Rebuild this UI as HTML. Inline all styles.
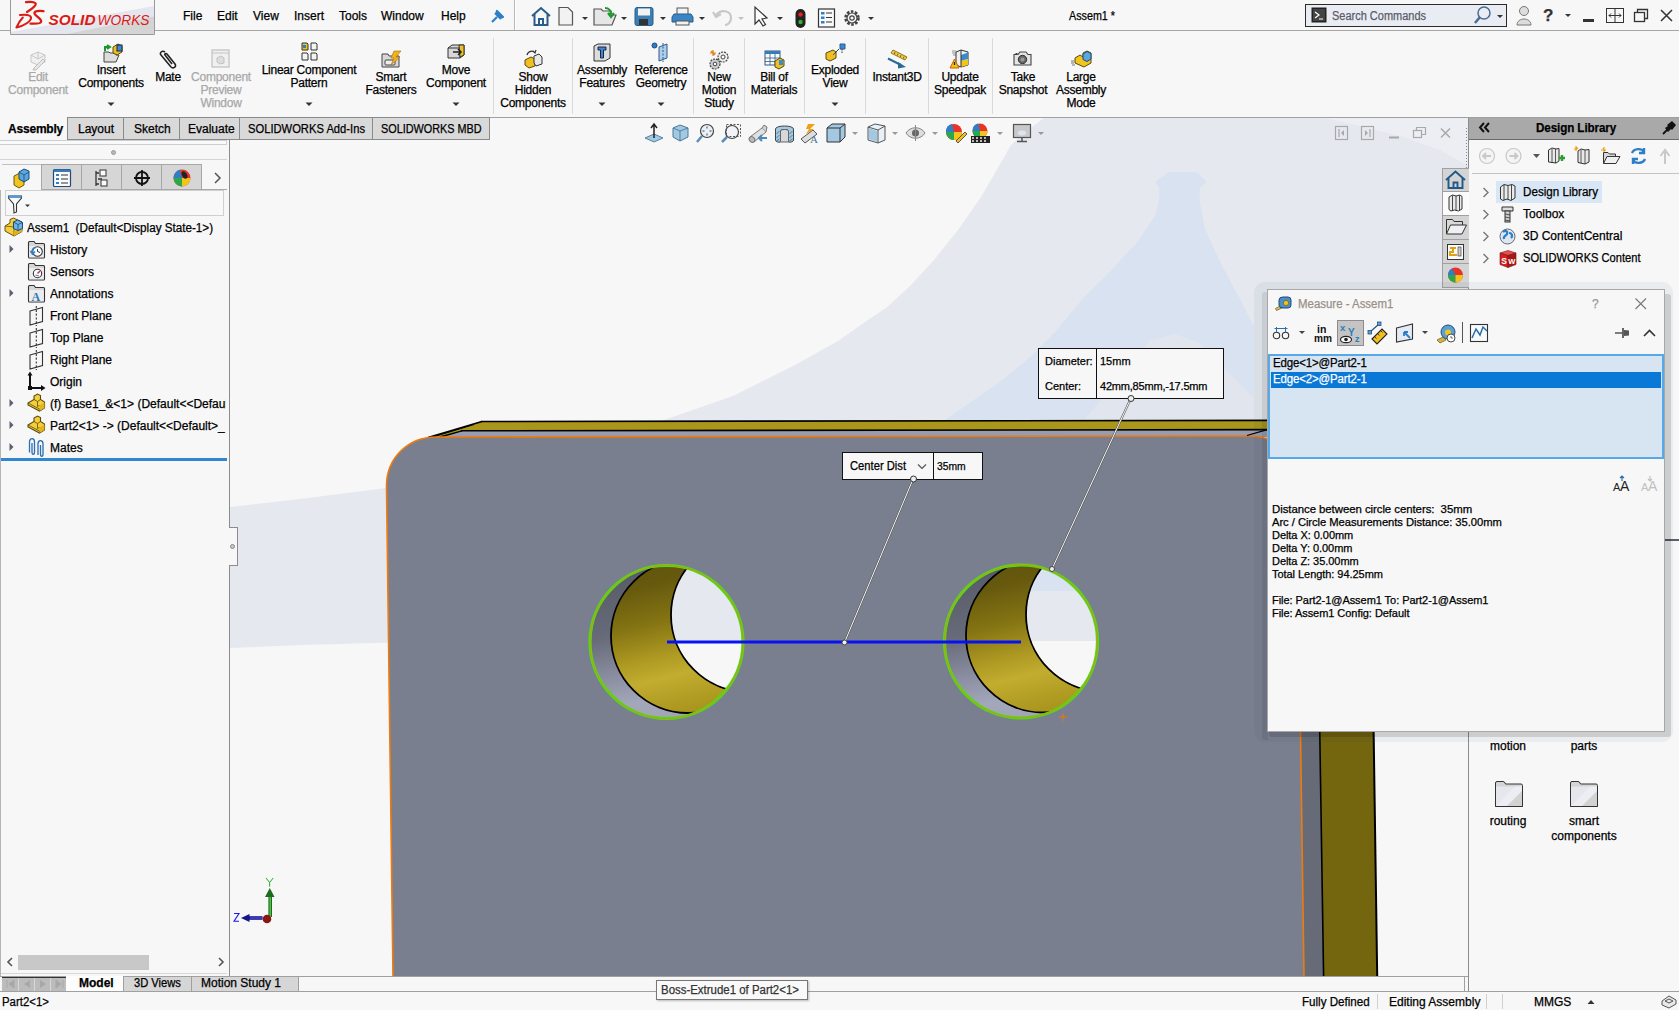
<!DOCTYPE html>
<html><head><meta charset="utf-8">
<style>
*{margin:0;padding:0;box-sizing:border-box}
html,body{width:1679px;height:1010px;overflow:hidden;background:#f7f7f7;font-family:"Liberation Sans",sans-serif;font-size:12px;color:#000}
.a{position:absolute}
.t{position:absolute;white-space:nowrap;line-height:13px;-webkit-text-stroke:0.25px currentColor}
.c{text-align:center}
.dis{color:#a8a8a8}
svg{position:absolute;overflow:visible}
</style></head><body>


<!-- ===== TOP BAR ===== -->
<div id="top" class="a" style="left:0;top:0;width:1679px;height:31px;background:#f7f7f7;border-bottom:1px solid #a6a6a6">
<!-- logo -->
<svg width="146" height="36" style="left:10px;top:0;z-index:6">
<rect x="0" y="0" width="145" height="35" fill="#f7f7f7"/>
<path d="M0.5 32 L144 6 L144 35 L0.5 35 Z" fill="#e3e6ee"/>
<path d="M52 35 L144 16.5 L144 35 Z" fill="#d4d4d4"/>
<path d="M0.5 0 L0.5 34.5 L144.5 34.5 L144.5 0" fill="none" stroke="#9a9a9a" stroke-width="1"/>
<path d="M16 2.2 C20 1.6 24 1.8 25.5 3.2 C26.5 4.5 24 8 17 12" fill="none" stroke="#dc1a14" stroke-width="2.2" stroke-linecap="round"/>
<path d="M10 15 C15 14.5 20.5 14.6 21 17.5 C21.5 21 14 26 6.5 27.5 C8 24 10.5 20 12.8 17.6" fill="none" stroke="#dc1a14" stroke-width="2.1" stroke-linecap="round" stroke-linejoin="round"/>
<path d="M33.5 11.2 C29 10.5 24 11 24.5 13.5 C25 16 31.5 18.5 31.2 21.5 C31 23.8 24 23.8 20.5 23.6" fill="none" stroke="#dc1a14" stroke-width="2.3" stroke-linecap="round"/>
<text x="38.5" y="25" font-family="Liberation Sans" font-weight="bold" font-style="italic" font-size="15" fill="#dc1a14" textLength="47" lengthAdjust="spacingAndGlyphs">SOLID</text>
<text x="87.5" y="25" font-family="Liberation Sans" font-style="italic" font-size="15" fill="#dc1a14" textLength="52" lengthAdjust="spacingAndGlyphs">WORKS</text>
</svg>
<div class="t" style="left:183px;top:10px">File</div>
<div class="t" style="left:217px;top:10px">Edit</div>
<div class="t" style="left:253px;top:10px">View</div>
<div class="t" style="left:294px;top:10px">Insert</div>
<div class="t" style="left:339px;top:10px">Tools</div>
<div class="t" style="left:381px;top:10px">Window</div>
<div class="t" style="left:441px;top:10px">Help</div>
<svg width="16" height="16" style="left:489px;top:8px"><path d="M3 14 L8 9 M6 5 L12 11 M8 3 L14 9 L11 10 L7 6 Z" stroke="#2e7fc8" stroke-width="2.2" fill="#2e7fc8" stroke-linejoin="round"/></svg>
<div class="a" style="left:514px;top:0;width:1px;height:30px;background:#b8b8b8"></div>
<div class="a" style="left:515px;top:0;width:1px;height:30px;background:#fff"></div>
<!-- quick access icons -->
<svg width="400" height="24" style="left:525px;top:4px">
<!-- home -->
<path d="M7 12 L16 4 L25 12 M9.5 10 L9.5 21 L22.5 21 L22.5 10 M14 21 L14 15 L18 15 L18 21" fill="none" stroke="#2a5d8a" stroke-width="2"/>
<!-- new doc -->
<path d="M34 3.5 L43 3.5 L47.5 8 L47.5 21 L34 21 Z" fill="#f2f2f2" stroke="#555" stroke-width="1.2"/>
<path d="M57 13 L63 13 L60 16 Z" fill="#333"/>
<!-- open -->
<path d="M69 5 L76 5 L78 7 L86 7 L86 11 L91 11 L87 21 L69 21 Z" fill="#e6e6e6" stroke="#555" stroke-width="1.2"/>
<path d="M80 4 C84 4 86 7 86 10 M83 9 L86 13 L89 9" fill="none" stroke="#1d9a2a" stroke-width="2.2"/>
<path d="M96 13 L102 13 L99 16 Z" fill="#333"/>
<!-- save -->
<rect x="110" y="3.5" width="18" height="18" rx="2" fill="#3b7fb6" stroke="#2a5d8a"/>
<rect x="113" y="4.5" width="12" height="7" fill="#f2f2f2"/>
<rect x="114" y="15" width="9" height="6" fill="#333"/>
<path d="M135 13 L141 13 L138 16 Z" fill="#333"/>
<!-- print -->
<rect x="152" y="4" width="11" height="7" fill="#f2f2f2" stroke="#555"/>
<path d="M149 10 L166 10 L168 13 L168 18 L147 18 L147 13 Z" fill="#3a86c5" stroke="#2a5d8a"/>
<rect x="151" y="17" width="13" height="4" fill="#f2f2f2" stroke="#555"/>
<path d="M174 13 L180 13 L177 16 Z" fill="#333"/>
<!-- undo disabled -->
<path d="M191 11 C196 5 206 6 206 14 C206 18 203 21 200 21 M188 8 L191 13 L196 10" fill="none" stroke="#c8c8c8" stroke-width="2.2"/>
<path d="M213 13 L219 13 L216 16 Z" fill="#c0c0c0"/>
<!-- select arrow -->
<path d="M230 3 L230 20 L234 16 L238 22 L240.5 20.5 L237 15 L242 14 Z" fill="#fafafa" stroke="#333" stroke-width="1.2"/>
<path d="M252 13 L258 13 L255 16 Z" fill="#333"/>
<!-- traffic light -->
<rect x="270.5" y="5" width="10" height="19" rx="5" fill="#222"/>
<circle cx="275.5" cy="10.5" r="2.2" fill="#e52222"/>
<circle cx="275.5" cy="18" r="2.2" fill="#2bb52b"/>
<!-- list -->
<rect x="293.5" y="5" width="16" height="18" fill="#fafafa" stroke="#333" stroke-width="1.2"/>
<rect x="296" y="8" width="3.5" height="2.5" fill="#2e7fc8"/><rect x="296" y="12.5" width="3.5" height="2.5" fill="#2e7fc8"/><rect x="296" y="17" width="3.5" height="2.5" fill="#2e7fc8"/>
<path d="M301 9 L307 9 M301 13.5 L307 13.5 M301 18 L307 18" stroke="#333"/>
<!-- gear -->
<circle cx="327" cy="14" r="6.5" fill="none" stroke="#444" stroke-width="2.5" stroke-dasharray="2.6 1.5"/>
<circle cx="327" cy="14" r="5" fill="none" stroke="#444" stroke-width="1.2"/>
<circle cx="327" cy="14" r="2.2" fill="none" stroke="#444" stroke-width="1.2"/>
<path d="M343 13 L349 13 L346 16 Z" fill="#333"/>
</svg>
<div class="t" style="left:1069px;top:10px;transform:scaleX(0.895);transform-origin:0 0">Assem1 *</div>
<!-- search -->
<div class="a" style="left:1305px;top:4px;width:202px;height:23px;border:1.5px solid #2b2b2b;background:#e9ecf3"></div>
<svg width="16" height="16" style="left:1311px;top:7px"><rect x="0.5" y="0.5" width="15" height="15" fill="#222"/><rect x="2" y="2" width="12" height="12" fill="#444"/><path d="M4 5 L8 8 L4 11 M8 12 L12 12" stroke="#fff" stroke-width="1.2" fill="none"/></svg>
<div class="t" style="left:1332px;top:10px;color:#5c5c6a;transform:scaleX(0.915);transform-origin:0 0">Search Commands</div>
<svg width="30" height="20" style="left:1474px;top:6px"><circle cx="10" cy="7" r="6" fill="none" stroke="#4a6d94" stroke-width="1.5"/><path d="M6 11 L1 17" stroke="#4a6d94" stroke-width="2.5"/><path d="M23 9 L29 9 L26 12 Z" fill="#333"/></svg>
<svg width="20" height="22" style="left:1515px;top:5px"><circle cx="9" cy="6" r="4.5" fill="#ddd" stroke="#777"/><path d="M2 20 C2 12 16 12 16 20 Z" fill="#ddd" stroke="#777"/></svg>
<div class="t" style="left:1543px;top:7px;font-size:17px;font-weight:bold;color:#333;line-height:17px">?</div>
<svg width="10" height="6" style="left:1564px;top:13px"><path d="M1 1 L7 1 L4 4 Z" fill="#333"/></svg>
<div class="a" style="left:1583px;top:19px;width:11px;height:3px;background:#333"></div>
<svg width="20" height="16" style="left:1606px;top:8px"><rect x="0.5" y="0.5" width="17" height="14" fill="none" stroke="#333"/><path d="M9 0.5 L9 14.5 M3 7.5 L15 7.5 M5 5.5 L3 7.5 L5 9.5 M13 5.5 L15 7.5 L13 9.5" stroke="#333" fill="none"/></svg>
<svg width="16" height="16" style="left:1634px;top:8px"><rect x="0.5" y="4.5" width="10" height="9" fill="none" stroke="#333" stroke-width="1.3"/><path d="M3.5 4.5 L3.5 1.5 L13.5 1.5 L13.5 10.5 L10.5 10.5" fill="none" stroke="#333" stroke-width="1.3"/></svg>
<svg width="14" height="14" style="left:1660px;top:9px"><path d="M1 1 L12 12 M12 1 L1 12" stroke="#333" stroke-width="1.5"/></svg>
</div>


<div id="ribbon" class="a" style="left:0;top:31px;width:1679px;height:86px;background:#f7f7f7">
</div>
<div id="ribbon-c" class="a" style="left:0;top:0;width:0;height:0">
<svg width="20" height="20" style="left:28px;top:50px"><path d="M3 5 L10 2 L17 5 L17 12 L10 15 L3 12 Z" fill="#f0f0f0" stroke="#c8c8c8"/><path d="M10 2 L10 9 M3 5 L10 9 L17 5" stroke="#c8c8c8" fill="none"/><path d="M6 18 L15 9 L17 11 L8 20 L5 20 Z" fill="#e8e8e8" stroke="#bbb"/></svg><div class="t c" style="left:-22px;width:120px;top:71px;letter-spacing:-0.25px;color:#a8a8a8">Edit</div>
<div class="t c" style="left:-22px;width:120px;top:84px;letter-spacing:-0.25px;color:#a8a8a8">Component</div>
<svg width="20" height="20" style="left:103px;top:43px"><path d="M1 9 L6 9 L7 10 L13 10 L13 12 L16 12 L13 19 L1 19 Z" fill="#ddd" stroke="#444"/><path d="M2 8 L2 4 L6 4 M4 2 L7 4 L4 6" stroke="#1a9a2a" stroke-width="2" fill="none"/><path d="M10 4 L15 1 L19 3 L19 9 L14 12 L10 10 Z" fill="#e8c020" stroke="#5a4a10"/><rect x="14" y="2" width="5" height="6" fill="#3a8ad0" stroke="#224"/></svg><div class="t c" style="left:51px;width:120px;top:64px;letter-spacing:-0.25px;color:#000">Insert</div>
<div class="t c" style="left:51px;width:120px;top:77px;letter-spacing:-0.25px;color:#000">Components</div>
<svg width="8" height="5" style="left:107px;top:102px"><path d="M0.5 0.5 L7.5 0.5 L4 4 Z" fill="#333"/></svg>
<svg width="20" height="20" style="left:159px;top:49px"><path d="M6 3 C3 1 0 4 2 6 L12 18 C14 20 18 18 16 15 L8 5 C7 4 5 5 6 6 L13 15" fill="none" stroke="#222" stroke-width="1.6"/></svg><div class="t c" style="left:108px;width:120px;top:71px;letter-spacing:-0.25px;color:#000">Mate</div>
<svg width="20" height="20" style="left:211px;top:49px"><rect x="1" y="1" width="17" height="17" fill="#f0f0f0" stroke="#c4c4c4" stroke-width="1.3"/><path d="M1 4 L18 4" stroke="#c4c4c4"/><path d="M6 9 L10 7 L13 9 L13 14 L9 15 L6 13 Z" fill="#ddd" stroke="#c0c0c0"/></svg><div class="t c" style="left:161px;width:120px;top:71px;letter-spacing:-0.25px;color:#a8a8a8">Component</div>
<div class="t c" style="left:161px;width:120px;top:84px;letter-spacing:-0.25px;color:#a8a8a8">Preview</div>
<div class="t c" style="left:161px;width:120px;top:97px;letter-spacing:-0.25px;color:#a8a8a8">Window</div>
<svg width="20" height="20" style="left:300px;top:42px"><path d="M2 1 L7 1 L8 2 L8 8 L2 8 Z" fill="#f3c21a" stroke="#333"/><path d="M11 1 L16 1 L17 2 L17 8 L11 8 Z" fill="#f4f4f4" stroke="#333"/><path d="M2 11 L7 11 L8 12 L8 18 L2 18 Z" fill="#f4f4f4" stroke="#333"/><path d="M11 11 L16 11 L17 12 L17 18 L11 18 Z" fill="#f4f4f4" stroke="#333"/><rect x="3" y="3" width="3" height="3" fill="#2a7fc8"/></svg><div class="t c" style="left:249px;width:120px;top:64px;letter-spacing:-0.25px;color:#000">Linear Component</div>
<div class="t c" style="left:249px;width:120px;top:77px;letter-spacing:-0.25px;color:#000">Pattern</div>
<svg width="8" height="5" style="left:305px;top:102px"><path d="M0.5 0.5 L7.5 0.5 L4 4 Z" fill="#333"/></svg>
<svg width="22" height="20" style="left:381px;top:50px"><path d="M1 4 L7 4 L8 6 L18 6 L18 17 L1 17 Z" fill="#d8d8d8" stroke="#444"/><rect x="4" y="10" width="10" height="5" rx="1" fill="#eee" stroke="#444"/><path d="M13 1 L20 1 L15 7 L19 7 L10 15 L13 8 L10 8 Z" fill="#f4b21a" stroke="#a86a10" stroke-width="0.6"/></svg><div class="t c" style="left:331px;width:120px;top:71px;letter-spacing:-0.25px;color:#000">Smart</div>
<div class="t c" style="left:331px;width:120px;top:84px;letter-spacing:-0.25px;color:#000">Fasteners</div>
<svg width="20" height="20" style="left:447px;top:43px"><path d="M1 5 L5 2 L17 2 L17 12 L13 15 L1 15 Z" fill="#d8d8d8" stroke="#333"/><path d="M1 5 L13 5 L13 15 M13 5 L17 2" fill="none" stroke="#333"/><path d="M12 2 L17 2 L17 12 L13 14 Z" fill="#f0c020" stroke="#333"/><path d="M6 9 L14 9 M11 6 L14 9 L11 12" stroke="#222" stroke-width="1.6" fill="none"/></svg><div class="t c" style="left:396px;width:120px;top:64px;letter-spacing:-0.25px;color:#000">Move</div>
<div class="t c" style="left:396px;width:120px;top:77px;letter-spacing:-0.25px;color:#000">Component</div>
<svg width="8" height="5" style="left:452px;top:102px"><path d="M0.5 0.5 L7.5 0.5 L4 4 Z" fill="#333"/></svg>
<svg width="22" height="20" style="left:522px;top:49px"><path d="M3 11 L9 8 L13 10 L13 17 L7 19 L3 16 Z" fill="#f0c020" stroke="#5a4a10"/><path d="M12 7 L17 5 L20 8 L20 15 L14 17 L12 14 Z" fill="#e8e8e8" stroke="#333"/><path d="M5 6 C6 2 11 1 13 4 M11 2 L13 4 L14 1" stroke="#333" fill="none" stroke-width="1.2"/></svg><div class="t c" style="left:473px;width:120px;top:71px;letter-spacing:-0.25px;color:#000">Show</div>
<div class="t c" style="left:473px;width:120px;top:84px;letter-spacing:-0.25px;color:#000">Hidden</div>
<div class="t c" style="left:473px;width:120px;top:97px;letter-spacing:-0.25px;color:#000">Components</div>
<svg width="20" height="20" style="left:592px;top:43px"><path d="M2 3 L6 1 L18 1 L18 15 L13 18 L2 18 Z" fill="#dcdcdc" stroke="#333"/><path d="M6 4 L14 4 L14 7 L11.5 7 L11.5 15 L8.5 15 L8.5 7 L6 7 Z" fill="#3a8ad0" stroke="#224"/></svg><div class="t c" style="left:542px;width:120px;top:64px;letter-spacing:-0.25px;color:#000">Assembly</div>
<div class="t c" style="left:542px;width:120px;top:77px;letter-spacing:-0.25px;color:#000">Features</div>
<svg width="8" height="5" style="left:598px;top:102px"><path d="M0.5 0.5 L7.5 0.5 L4 4 Z" fill="#333"/></svg>
<svg width="22" height="20" style="left:651px;top:42px"><circle cx="3.5" cy="3.5" r="2.5" fill="#2a7fc8" stroke="#1a4a80"/><path d="M8 5 L16 2 L16 16 L8 19 Z" fill="#b0cdea" stroke="#2a5d8a"/><path d="M12 1 L12 20" stroke="#2a5d8a" stroke-dasharray="2 1.5"/></svg><div class="t c" style="left:601px;width:120px;top:64px;letter-spacing:-0.25px;color:#000">Reference</div>
<div class="t c" style="left:601px;width:120px;top:77px;letter-spacing:-0.25px;color:#000">Geometry</div>
<svg width="8" height="5" style="left:657px;top:102px"><path d="M0.5 0.5 L7.5 0.5 L4 4 Z" fill="#333"/></svg>
<svg width="22" height="22" style="left:708px;top:49px"><circle cx="15" cy="8" r="5" fill="#eee" stroke="#444" stroke-width="1.2" stroke-dasharray="2 1"/><circle cx="15" cy="8" r="2" fill="#fff" stroke="#444"/><circle cx="7" cy="15" r="5" fill="#ccc" stroke="#444" stroke-width="1.2" stroke-dasharray="2 1"/><circle cx="7" cy="15" r="1.8" fill="#fff" stroke="#444"/><path d="M3 2 L7 6 M5 1 L5 7 M2 4 L8 4" stroke="#e08010" stroke-width="1.2"/></svg><div class="t c" style="left:659px;width:120px;top:71px;letter-spacing:-0.25px;color:#000">New</div>
<div class="t c" style="left:659px;width:120px;top:84px;letter-spacing:-0.25px;color:#000">Motion</div>
<div class="t c" style="left:659px;width:120px;top:97px;letter-spacing:-0.25px;color:#000">Study</div>
<svg width="22" height="20" style="left:764px;top:50px"><rect x="1" y="1" width="15" height="14" fill="#fafafa" stroke="#2a5d8a"/><rect x="1" y="1" width="15" height="3" fill="#3a7ab6"/><path d="M1 8 L16 8 M1 11.5 L16 11.5 M6 4 L6 15 M11 4 L11 15" stroke="#2a5d8a" stroke-width="0.8"/><path d="M11 11 L16 8 L20 10 L20 16 L15 19 L11 17 Z" fill="#f0c020" stroke="#5a4a10"/><rect x="15" y="10" width="4" height="5" fill="#3a8ad0"/></svg><div class="t c" style="left:714px;width:120px;top:71px;letter-spacing:-0.25px;color:#000">Bill of</div>
<div class="t c" style="left:714px;width:120px;top:84px;letter-spacing:-0.25px;color:#000">Materials</div>
<svg width="22" height="20" style="left:824px;top:43px"><path d="M2 10 L9 7 L12 9 L12 15 L6 18 L2 16 Z" fill="#f0c020" stroke="#5a4a10"/><path d="M9 12 L15 6 M16 1 L21 1 L21 6 L16 6 Z" stroke="#2a5d8a" fill="#3a8ad0" stroke-dasharray="0"/><path d="M11 10 L15 6" stroke="#333" stroke-dasharray="1.5 1"/><path d="M18 6 L18 10" stroke="#333" stroke-dasharray="1.5 1"/></svg><div class="t c" style="left:775px;width:120px;top:64px;letter-spacing:-0.25px;color:#000">Exploded</div>
<div class="t c" style="left:775px;width:120px;top:77px;letter-spacing:-0.25px;color:#000">View</div>
<svg width="8" height="5" style="left:831px;top:102px"><path d="M0.5 0.5 L7.5 0.5 L4 4 Z" fill="#333"/></svg>
<svg width="24" height="22" style="left:886px;top:49px"><path d="M5 4 L7 1 L21 8 L19 11 Z" fill="#f3d24a" stroke="#8a6a10" stroke-width="0.9"/><path d="M9 3 L8.5 5 M12 4.5 L11.5 6.5 M15 6 L14.5 8 M18 7.5 L17.5 9.5" stroke="#6a5010" stroke-width="0.9"/><path d="M2 9.5 L15 16" stroke="#2a6a9a" stroke-width="2"/><path d="M12 13 L20 18 L12 19.5 Z" fill="#2a6a9a"/></svg><div class="t c" style="left:837px;width:120px;top:71px;letter-spacing:-0.25px;color:#000">Instant3D</div>
<svg width="22" height="22" style="left:949px;top:49px"><path d="M7 3 L12 1 L19 3 L19 16 L12 18 L7 16 Z" fill="#f0f0f0" stroke="#333"/><path d="M12 6 L19 3.5 L19 10 L12 12 Z" fill="#3a8ad0"/><path d="M12 12 L19 10 L19 16 L12 18 Z" fill="#f2c51c"/><path d="M12 1 L12 18" stroke="#333"/><path d="M1 19 L5.5 10 L10 19 Z" fill="#f4c010" stroke="#c06010"/><path d="M5.5 13 L5.5 16" stroke="#222" stroke-width="1.3"/><path d="M3 2 L7 2 M3 4 L7 4 M4 6 L7 6" stroke="#666" stroke-width="0.7"/></svg><div class="t c" style="left:900px;width:120px;top:71px;letter-spacing:-0.25px;color:#000">Update</div>
<div class="t c" style="left:900px;width:120px;top:84px;letter-spacing:-0.25px;color:#000">Speedpak</div>
<svg width="22" height="20" style="left:1013px;top:50px"><path d="M1 4.5 L5 4.5 L7 2 L13 2 L15 4.5 L18 4.5 L18 15 L1 15 Z" fill="#e4e4e4" stroke="#444" stroke-width="1.1"/><circle cx="9.5" cy="9.5" r="4.2" fill="#666" stroke="#333"/><circle cx="9.5" cy="9.5" r="2" fill="#999"/><rect x="2.5" y="3" width="2" height="1.5" fill="#444"/></svg><div class="t c" style="left:963px;width:120px;top:71px;letter-spacing:-0.25px;color:#000">Take</div>
<div class="t c" style="left:963px;width:120px;top:84px;letter-spacing:-0.25px;color:#000">Snapshot</div>
<svg width="22" height="20" style="left:1071px;top:49px"><path d="M4 9 L9 6 L12 8 L12 4 L16 2 L20 4 L20 14 L13 18 L4 14 Z" fill="#f2c51c" stroke="#5a4a10"/><path d="M12 5 L16 2.5 L20 4.5 L20 10 L16 12.5 L12 10.5 Z" fill="#5aa7e0" stroke="#1f4a78"/><path d="M0 12 L3 12 M0 14 L3 14 M1 16 L4 16" stroke="#555" stroke-width="0.8"/></svg><div class="t c" style="left:1021px;width:120px;top:71px;letter-spacing:-0.25px;color:#000">Large</div>
<div class="t c" style="left:1021px;width:120px;top:84px;letter-spacing:-0.25px;color:#000">Assembly</div>
<div class="t c" style="left:1021px;width:120px;top:97px;letter-spacing:-0.25px;color:#000">Mode</div>
<div class="a" style="left:493px;top:38px;width:1px;height:76px;background:#dadada"></div>
<div class="a" style="left:572px;top:38px;width:1px;height:76px;background:#dadada"></div>
<div class="a" style="left:693px;top:38px;width:1px;height:76px;background:#dadada"></div>
<div class="a" style="left:744px;top:38px;width:1px;height:76px;background:#dadada"></div>
<div class="a" style="left:804px;top:38px;width:1px;height:76px;background:#dadada"></div>
<div class="a" style="left:865px;top:38px;width:1px;height:76px;background:#dadada"></div>
<div class="a" style="left:928px;top:38px;width:1px;height:76px;background:#dadada"></div>
<div class="a" style="left:992px;top:38px;width:1px;height:76px;background:#dadada"></div>
</div>
<!-- ===== VIEWPORT ===== -->
<div id="vp" class="a" style="left:230px;top:117px;width:1238px;height:859px;background:#f7f7f7;overflow:hidden">
<svg width="1238" height="859" viewBox="230 117 1238 859" style="left:0;top:0">
<defs>
<clipPath id="h1c"><circle cx="666.5" cy="642" r="76.5"/></clipPath>
<clipPath id="h2c"><circle cx="1021" cy="641.5" r="76.5"/></clipPath>
<linearGradient id="gw" x1="0" y1="0" x2="0.3" y2="1"><stop offset="0" stop-color="#4e515c"/><stop offset="0.5" stop-color="#676a78"/><stop offset="0.7" stop-color="#8a8ea0"/><stop offset="0.85" stop-color="#a3a7ba"/><stop offset="1" stop-color="#a0a4b6"/></linearGradient>
<linearGradient id="go" x1="0" y1="0" x2="0.3" y2="1"><stop offset="0" stop-color="#574a0c"/><stop offset="0.3" stop-color="#675a0e"/><stop offset="0.5" stop-color="#847413"/><stop offset="0.68" stop-color="#ad9822"/><stop offset="0.8" stop-color="#c2ad30"/><stop offset="1" stop-color="#aa951e"/></linearGradient>
</defs>
<!-- background swoosh -->
<path d="M230 507 L300 499 L386 488 L470 472 L560 448 L664 420 L733 396 L795 365 L838 341 L868 320 L886 308 L910 286 L934 260 L958 230 L981 197 L995 173 L1011 145 L1028 130 L1045 117 L1468 117 L1468 976 L230 976 Z" fill="#e5e8ef"/>
<path d="M230 648 C300 645 380 642 500 641 L1468 641 L1468 976 L230 976 Z" fill="#f7f7f7"/>
<path d="M1169 172 L1197 172 L1206.5 182 L1199.6 188 L1199.6 201.6 L1205 229.3 L1221.8 265.3 L1241.2 301.4 L1253.7 326.3 L1290 340 L1290 591 L790 591 L945 420 L1000 382 L1027.7 359.6 L1055.4 331.9 L1083 298.6 L1110.9 270.9 L1138.6 240.4 L1155 215.4 L1159.4 198.8 L1159.4 188 L1155 182 Z" fill="#d8e2f0"/>
<path d="M1083 421 L1150 340 L1175 334 L1200 343 L1254 398 L1254 421 Z" fill="#e1e5ed"/>
<path d="M1254 326 L1290 300 L1290 421 L1254 421 Z" fill="#e5e8ef"/>
<path d="M1320 117 L1360 126 L1400 136 L1440 150 L1468 166 L1468 117 Z" fill="#eceef3"/>
<path d="M1466.5 128 L1466.5 168" stroke="#888" stroke-width="1" stroke-dasharray="1 2"/>
<!-- part: right side olive & gray -->
<path d="M1296 430 L1315 430 L1323.4 976 L1303.8 976 Z" fill="#676b78"/>
<path d="M1315 430 L1369 430 L1377 976 L1323.4 976 Z" fill="#74650f"/>
<path d="M1315 430 L1323.6 976" stroke="#000" stroke-width="1.6"/>
<path d="M1369.2 430 L1377.2 976" stroke="#000" stroke-width="2"/>
<!-- top strip -->
<path d="M482 421 L1290 420 L1290 437 L429 438 Z" fill="#a9961b"/>
<path d="M462 431 L1290 429.8 L1290 437 L440 438 Z" fill="#979cb0"/>
<path d="M481 421.5 L1290 420.4" stroke="#000" stroke-width="1.6"/>
<path d="M461 430.8 L1290 429.6" stroke="#000" stroke-width="1.6"/>
<path d="M482 421.5 L428 437.5" stroke="#000" stroke-width="1.5"/>
<path d="M474 424.5 L433 437" stroke="#000" stroke-width="1"/>
<path d="M462 430.8 L440 437" stroke="#000" stroke-width="1.3"/>
<!-- main face with holes -->
<path fill-rule="evenodd" fill="#7a7f8f" d="M436 437 L1250 436 C1278 436 1297 460 1297 490 L1304 976 L393 976 L386.5 486 C386.5 458 408 437 436 437 Z
 M590 642 A76.5 76.5 0 1 0 743 642 A76.5 76.5 0 1 0 590 642 Z
 M944.5 641.5 A76.5 76.5 0 1 0 1097.5 641.5 A76.5 76.5 0 1 0 944.5 641.5 Z"/>
<path fill="none" stroke="#f07a0a" stroke-width="1.6" d="M1297 490 C1297 460 1278 436 1250 436 L436 437 C408 437 386.5 458 386.5 486 L393 976"/>
<path d="M1247 435.5 L1290 423" stroke="#000" stroke-width="1.3"/>
<path fill="none" stroke="#f07a0a" stroke-width="1.6" d="M1297 490 L1304 976"/>
<!-- hole 1 -->
<g clip-path="url(#h1c)">
<path fill-rule="evenodd" fill="url(#gw)" d="M580 555 L760 555 L760 730 L580 730 Z M671 615 A77 77 0 1 0 825 615 A77 77 0 1 0 671 615 Z"/>
<path fill-rule="evenodd" fill="url(#go)" d="M611 636 A77 77 0 1 0 765 636 A77 77 0 1 0 611 636 Z M671 615 A77 77 0 1 0 825 615 A77 77 0 1 0 671 615 Z"/>
<circle cx="688" cy="636" r="77" fill="none" stroke="#000" stroke-width="1.8"/>
<circle cx="748" cy="615" r="77" fill="none" stroke="#000" stroke-width="1.8"/>
</g>
<circle cx="666.5" cy="642" r="76.5" fill="none" stroke="#44e414" stroke-width="3.2"/>
<circle cx="666.5" cy="642" r="76.5" fill="none" stroke="#d98a18" stroke-width="1"/>
<!-- hole 2 -->
<g clip-path="url(#h2c)">
<path fill-rule="evenodd" fill="url(#gw)" d="M935 555 L1110 555 L1110 730 L935 730 Z M1026 614.5 A77 77 0 1 0 1180 614.5 A77 77 0 1 0 1026 614.5 Z"/>
<path fill-rule="evenodd" fill="url(#go)" d="M966 635.5 A77 77 0 1 0 1120 635.5 A77 77 0 1 0 966 635.5 Z M1026 614.5 A77 77 0 1 0 1180 614.5 A77 77 0 1 0 1026 614.5 Z"/>
<circle cx="1043" cy="635.5" r="77" fill="none" stroke="#000" stroke-width="1.8"/>
<circle cx="1103" cy="614.5" r="77" fill="none" stroke="#000" stroke-width="1.8"/>
</g>
<circle cx="1021" cy="641.5" r="76.5" fill="none" stroke="#44e414" stroke-width="3.2"/>
<circle cx="1021" cy="641.5" r="76.5" fill="none" stroke="#d98a18" stroke-width="1"/>
<!-- blue center line -->
<path d="M667 642 L1021 642" stroke="#0612f2" stroke-width="3.2"/>
<!-- leaders -->
<path d="M913.5 478 L844.5 642.5" stroke="#555" stroke-width="2"/>
<path d="M913.5 478 L844.5 642.5" stroke="#fafafa" stroke-width="1"/>
<path d="M1131 398 L1052 569" stroke="#555" stroke-width="2"/>
<path d="M1131 398 L1052 569" stroke="#fafafa" stroke-width="1"/>
<circle cx="844.5" cy="642.5" r="2.5" fill="#eee" stroke="#444" stroke-width="1"/>
<circle cx="913.5" cy="478" r="2.5" fill="#eee" stroke="#444" stroke-width="1"/>
<circle cx="1131" cy="398" r="2.5" fill="#eee" stroke="#444" stroke-width="1"/>
<circle cx="1052" cy="569" r="2.5" fill="#eee" stroke="#444" stroke-width="1"/>
<!-- small orange cross -->
<path d="M1059 717 L1067 717 M1063 713 L1063 721" stroke="#e8780e" stroke-width="1"/>
<!-- triad -->
<path d="M270.2 917 L270.2 896" stroke="#1e6a1e" stroke-width="3.6"/>
<path d="M270.2 917 L270.2 897" stroke="#4ccc4c" stroke-width="1.4"/>
<path d="M265 897 L269.8 888 L274.5 897 Z" fill="#1e6a1e"/>
<path d="M262.5 918 L249 918" stroke="#16168a" stroke-width="3.6"/>
<path d="M262.5 918 L250 918" stroke="#4a4ae0" stroke-width="1.4"/>
<path d="M249.5 914 L241 918 L249.5 922 Z" fill="#16168a"/>
<circle cx="267" cy="919" r="4.3" fill="#8a1616"/>
</svg>
</div>


<div id="tabs" class="a" style="left:0;top:117px;width:490px;height:23px;z-index:10">
<div class="a" style="left:0;top:0;width:67px;height:23px;background:#f7f7f7;border-bottom:1px solid #f7f7f7"></div>
<div class="t" style="left:8px;top:6px;font-weight:bold;letter-spacing:-0.2px">Assembly</div>
<div class="a" style="left:67px;top:0;width:423px;height:23px;background:#d9d9d9;border:1px solid #8a8a8a;border-right:1px solid #8a8a8a"></div>
<div class="a" style="left:123px;top:0;width:1px;height:23px;background:#8a8a8a"></div>
<div class="a" style="left:179px;top:0;width:1px;height:23px;background:#8a8a8a"></div>
<div class="a" style="left:239px;top:0;width:1px;height:23px;background:#8a8a8a"></div>
<div class="a" style="left:372px;top:0;width:1px;height:23px;background:#8a8a8a"></div>
<div class="t" style="left:78px;top:6px">Layout</div>
<div class="t" style="left:134px;top:6px">Sketch</div>
<div class="t" style="left:188px;top:6px">Evaluate</div>
<div class="t" style="left:248px;top:6px;transform:scaleX(0.933);transform-origin:0 0">SOLIDWORKS Add-Ins</div>
<div class="t" style="left:381px;top:6px;transform:scaleX(0.904);transform-origin:0 0">SOLIDWORKS MBD</div>
</div>
<div id="left" class="a" style="left:0;top:140px;width:230px;height:836px;background:#f7f7f7;border-right:1px solid #8c8c8c">
</div>
<div id="left-c" class="a" style="left:0;top:0;width:0;height:0;z-index:8">
<div class="a" style="left:67px;top:117px;width:1612px;height:1px;background:#a0a0a0"></div>
<div class="a" style="left:0;top:140px;width:227px;height:5px;border:1px solid #c8d0d4;border-left:none;background:#fafafa"></div>
<div class="a" style="left:111px;top:150px;width:5px;height:5px;border-radius:50%;background:#b8b8b8;border:1px solid #999"></div>
<div class="a" style="left:0;top:159px;width:227px;height:1px;background:#d4d4d4"></div>
<div class="a" style="left:2px;top:164px;width:40px;height:26px;background:#f7f7f7;border-top:1px solid #c0c0c0"></div>
<div class="a" style="left:41px;top:164px;width:41px;height:26px;background:#d6d6d6;border:1px solid #a8a8a8"></div>
<div class="a" style="left:81px;top:164px;width:41px;height:26px;background:#d6d6d6;border:1px solid #a8a8a8"></div>
<div class="a" style="left:121px;top:164px;width:41px;height:26px;background:#d6d6d6;border:1px solid #a8a8a8"></div>
<div class="a" style="left:161px;top:164px;width:41px;height:26px;background:#d6d6d6;border:1px solid #a8a8a8"></div>
<div class="a" style="left:41px;top:189px;width:186px;height:1px;background:#a8a8a8"></div>
<svg width="230" height="30" style="left:0;top:164px">
<path d="M14 12 L20 9 L24 11 L24 21 L19 24 L14 21 Z" fill="#f2c51c" stroke="#6a5a10"/>
<path d="M19 8 L24 5 L29 7 L29 15 L24 18 L19 15 Z" fill="#59a7e0" stroke="#1f4a78"/>
<path d="M19 8 L24 11 L29 8 M24 11 L24 18" fill="none" stroke="#1f4a78" stroke-width="0.8"/>
<rect x="53.5" y="5.5" width="17" height="17" rx="1" fill="#fafafa" stroke="#1f4a78" stroke-width="1.2"/>
<rect x="53.5" y="5.5" width="17" height="2.5" fill="#3a7ab6"/>
<rect x="56" y="10" width="3" height="2" fill="#2e7fc8"/><rect x="56" y="14" width="3" height="2" fill="#2e7fc8"/><rect x="56" y="18" width="3" height="2" fill="#2e7fc8"/>
<path d="M61 11 L68 11 M61 15 L68 15 M61 19 L68 19" stroke="#333" stroke-width="1"/>
<path d="M96 7 L96 22 M96 9 L99 9 M96 20 L99 20 M98 15 L102 15" stroke="#333" stroke-width="1.3" fill="none"/>
<rect x="100" y="6" width="6" height="6" fill="#fafafa" stroke="#333"/><rect x="101" y="16" width="6" height="6" fill="#fafafa" stroke="#333"/>
<circle cx="142" cy="14" r="6" fill="none" stroke="#111" stroke-width="1.8"/>
<path d="M134 14 L150 14 M142 6 L142 22" stroke="#111" stroke-width="1.8"/>
<circle cx="182" cy="14" r="8.5" fill="#e6342a"/>
<path d="M182 14 L173.5 14 A8.5 8.5 0 0 0 182 22.5 Z" fill="#2aa84a"/>
<path d="M182 14 L182 22.5 A8.5 8.5 0 0 0 190.5 14 Z" fill="#f2c51c"/>
<path d="M182 14 L173.5 14 A8.5 8.5 0 0 1 180 5.7 Z" fill="#2e7fc8"/>
<ellipse cx="184.5" cy="11" rx="2.5" ry="4" fill="#222" transform="rotate(-30 184.5 11)"/>
<path d="M215 9 L220 14 L215 19" fill="none" stroke="#555" stroke-width="1.5"/>
</svg>
<div class="a" style="left:5px;top:190px;width:219px;height:26px;border:1px solid #cfcfcf;background:#f8f8f8"></div>
<svg width="30" height="24" style="left:6px;top:193px"><path d="M2.5 3 L15.5 3 L15.5 5 L10.5 11 L10.5 19 L8 20 L7.5 11 L2.5 5 Z" fill="#fafafa" stroke="#333" stroke-width="1.1"/><rect x="2.5" y="2.5" width="13" height="2.5" fill="#5a9ad0"/><path d="M19 11.5 L24 11.5 L21.5 14 Z" fill="#333"/></svg>
<svg width="22" height="22" style="left:4px;top:217px"><path d="M1 9 L6 6 L6 2.5 L9.5 1 L18 5 L18 14.5 L10 19 L1 14 Z" fill="#f5cf3a" stroke="#6a5210" stroke-width="1"/><path d="M10 19 L10 10 L18 5.5 M1 9 L10 10" fill="none" stroke="#6a5210" stroke-width="0.8"/><path d="M10 15 L18 10.5 L18 14.5 L10 19 Z" fill="#e0b020"/><path d="M9.5 5 L13.5 3 L18.5 5.5 L18.5 11.5 L14 13.5 L9.5 11.5 Z" fill="#6ab4e8" stroke="#1f4a78" stroke-width="1"/><path d="M9.5 5 L14 7.5 L18.5 5.5 M14 7.5 L14 13.5" fill="none" stroke="#1f4a78" stroke-width="0.8"/></svg>
<div class="t" style="left:27px;top:222px;width:199px;overflow:hidden;transform:scaleX(0.972);transform-origin:0 0">Assem1&nbsp; (Default&lt;Display State-1&gt;)</div>
<svg width="8" height="10" style="left:8px;top:244px"><path d="M1.5 1 L5.5 5 L1.5 9 Z" fill="#5a6070"/></svg>
<svg width="22" height="20" style="left:27px;top:239px"><path d="M1.5 18 L1.5 3.5 Q1.5 2.5 2.5 2.5 L7 2.5 L8.5 4.5 L16.5 4.5 Q17.5 4.5 17.5 5.5 L17.5 18 Q17.5 19 16.5 19 L2.5 19 Q1.5 19 1.5 18 Z" fill="#d6d6d6" stroke="#333" stroke-width="1.1"/><rect x="2.2" y="7" width="14.6" height="11.3" fill="#ececf0"/><circle cx="10.5" cy="12.5" r="4.8" fill="#fff" stroke="#333" stroke-width="1.1"/><path d="M10.5 10 L10.5 12.5 L13 13.5" stroke="#333" fill="none"/><path d="M9 8.5 C6 8.5 4.5 11 5.5 14 M3.5 12 L5.5 15 L8 12.5" stroke="#2e7fc8" fill="none" stroke-width="1.6"/></svg>
<div class="t" style="left:50px;top:244px;width:176px;overflow:hidden">History</div>
<svg width="22" height="20" style="left:27px;top:261px"><path d="M1.5 18 L1.5 3.5 Q1.5 2.5 2.5 2.5 L7 2.5 L8.5 4.5 L16.5 4.5 Q17.5 4.5 17.5 5.5 L17.5 18 Q17.5 19 16.5 19 L2.5 19 Q1.5 19 1.5 18 Z" fill="#d6d6d6" stroke="#333" stroke-width="1.1"/><rect x="2.2" y="7" width="14.6" height="11.3" fill="#ececf0"/><circle cx="10.5" cy="12.5" r="4.2" fill="#fff" stroke="#333" stroke-width="1.1"/><path d="M10.5 12.5 L13 10" stroke="#d33" stroke-width="1.6"/><path d="M8.5 14 L12 15" stroke="#2e7fc8" stroke-width="1"/></svg>
<div class="t" style="left:50px;top:266px;width:176px;overflow:hidden">Sensors</div>
<svg width="8" height="10" style="left:8px;top:288px"><path d="M1.5 1 L5.5 5 L1.5 9 Z" fill="#5a6070"/></svg>
<svg width="22" height="20" style="left:27px;top:283px"><path d="M1.5 18 L1.5 3.5 Q1.5 2.5 2.5 2.5 L7 2.5 L8.5 4.5 L16.5 4.5 Q17.5 4.5 17.5 5.5 L17.5 18 Q17.5 19 16.5 19 L2.5 19 Q1.5 19 1.5 18 Z" fill="#d6d6d6" stroke="#333" stroke-width="1.1"/><rect x="2.2" y="7" width="14.6" height="11.3" fill="#ececf0"/><text x="4.5" y="17.5" font-family="Liberation Serif" font-weight="bold" font-size="12" fill="#2a7ab0">A</text></svg>
<div class="t" style="left:50px;top:288px;width:176px;overflow:hidden">Annotations</div>
<svg width="22" height="20" style="left:27px;top:305px"><path d="M3 6 L15.5 2.5 L15.5 16.5 L3 20 Z" fill="none" stroke="#333" stroke-width="1.1"/><path d="M9.3 1 L9.3 21" stroke="#333" stroke-width="1.1" stroke-dasharray="2.2 1.6"/></svg>
<div class="t" style="left:50px;top:310px;width:176px;overflow:hidden">Front Plane</div>
<svg width="22" height="20" style="left:27px;top:327px"><path d="M3 6 L15.5 2.5 L15.5 16.5 L3 20 Z" fill="none" stroke="#333" stroke-width="1.1"/><path d="M9.3 1 L9.3 21" stroke="#333" stroke-width="1.1" stroke-dasharray="2.2 1.6"/></svg>
<div class="t" style="left:50px;top:332px;width:176px;overflow:hidden">Top Plane</div>
<svg width="22" height="20" style="left:27px;top:349px"><path d="M3 6 L15.5 2.5 L15.5 16.5 L3 20 Z" fill="none" stroke="#333" stroke-width="1.1"/><path d="M9.3 1 L9.3 21" stroke="#333" stroke-width="1.1" stroke-dasharray="2.2 1.6"/></svg>
<div class="t" style="left:50px;top:354px;width:176px;overflow:hidden">Right Plane</div>
<svg width="22" height="20" style="left:27px;top:371px"><path d="M3 3 L3 17 L16 17" fill="none" stroke="#111" stroke-width="2"/><path d="M0.5 4.5 L3 0.5 L5.5 4.5 Z M14 14 L18.5 17 L14 20 Z" fill="#111"/><rect x="1" y="15" width="4" height="4" fill="#111"/></svg>
<div class="t" style="left:50px;top:376px;width:176px;overflow:hidden">Origin</div>
<svg width="8" height="10" style="left:8px;top:398px"><path d="M1.5 1 L5.5 5 L1.5 9 Z" fill="#5a6070"/></svg>
<svg width="22" height="20" style="left:27px;top:393px"><path d="M1 10 L7 6.5 L7 3 L10.5 1 L13.5 2.5 L13.5 6.5 L17.5 9 L17.5 15 L12.5 18 L1 12 Z" fill="#f5cf3a" stroke="#5a4a10" stroke-width="1.1"/><path d="M1 10 L12.5 16 L17.5 12.5 M12.5 16 L12.5 18 M7 6.5 L10.5 8.5 L13.5 6.5 M10.5 8.5 L10.5 13.5 L12.5 12.5" fill="none" stroke="#5a4a10" stroke-width="0.8"/><path d="M12.5 12.5 L17.5 9.5 L17.5 15 L12.5 18 Z" fill="#e2b422"/></svg>
<div class="t" style="left:50px;top:398px;width:176px;overflow:hidden">(f) Base1_&amp;&lt;1&gt; (Default&lt;&lt;Defaul</div>
<svg width="8" height="10" style="left:8px;top:420px"><path d="M1.5 1 L5.5 5 L1.5 9 Z" fill="#5a6070"/></svg>
<svg width="22" height="20" style="left:27px;top:415px"><path d="M1 10 L7 6.5 L7 3 L10.5 1 L13.5 2.5 L13.5 6.5 L17.5 9 L17.5 15 L12.5 18 L1 12 Z" fill="#f5cf3a" stroke="#5a4a10" stroke-width="1.1"/><path d="M1 10 L12.5 16 L17.5 12.5 M12.5 16 L12.5 18 M7 6.5 L10.5 8.5 L13.5 6.5 M10.5 8.5 L10.5 13.5 L12.5 12.5" fill="none" stroke="#5a4a10" stroke-width="0.8"/><path d="M12.5 12.5 L17.5 9.5 L17.5 15 L12.5 18 Z" fill="#e2b422"/></svg>
<div class="t" style="left:50px;top:420px;width:176px;overflow:hidden">Part2&lt;1&gt; -&gt; (Default&lt;&lt;Default&gt;_</div>
<svg width="8" height="10" style="left:8px;top:442px"><path d="M1.5 1 L5.5 5 L1.5 9 Z" fill="#5a6070"/></svg>
<svg width="22" height="22" style="left:27px;top:437px"><path d="M2.5 15.5 L2.5 5 C2.5 0.5 7.5 0.5 7.5 5 L7.5 15 C7.5 18 5 18 5 15 L5 6" fill="none" stroke="#2a6fb0" stroke-width="1.3"/><path d="M11 18 L11 7 C11 2.5 16 2.5 16 7 L16 17 C16 20 13.5 20 13.5 17 L13.5 8" fill="none" stroke="#2a6fb0" stroke-width="1.3"/></svg>
<div class="t" style="left:50px;top:442px;width:176px;overflow:hidden">Mates</div>
<div class="a" style="left:1px;top:458px;width:226px;height:3px;background:#3087cf"></div>
<div class="a" style="left:18px;top:955px;width:131px;height:15px;background:#c8c8c8"></div>
<svg width="10" height="12" style="left:5px;top:956px"><path d="M7 2 L3 6 L7 10" fill="none" stroke="#555" stroke-width="1.6"/></svg>
<svg width="10" height="12" style="left:216px;top:956px"><path d="M3 2 L7 6 L3 10" fill="none" stroke="#555" stroke-width="1.6"/></svg>
<div class="a" style="left:0;top:973px;width:227px;height:1px;background:#d8d8d8"></div>
</div>
<div id="right" class="a" style="left:1468px;top:117px;width:211px;height:875px;background:#f7f7f7;border-left:1px solid #8c8c8c;z-index:4"></div>
<div id="right-c" class="a" style="left:0;top:0;width:0;height:0;z-index:5">
<div class="a" style="left:1469px;top:118px;width:210px;height:22px;background:#a9a9a9;border-bottom:1px solid #6a6a6a"></div>
<svg width="16" height="14" style="left:1477px;top:121px"><path d="M7 2 L3 6.5 L7 11 M12 2 L8 6.5 L12 11" fill="none" stroke="#111" stroke-width="2"/></svg>
<div class="t" style="left:1536px;top:122px;font-weight:bold;letter-spacing:-0.1px;transform:scaleX(0.97);transform-origin:0 0">Design Library</div>
<svg width="16" height="16" style="left:1661px;top:120px"><path d="M2 14 L7 9" stroke="#111" stroke-width="1.8"/><path d="M6 5 L11 1 L15 5 L11 10 L10 9 L7 12 L4 8 L7 6 Z" fill="#111"/></svg>
<svg width="211" height="24" style="left:1468px;top:144px">
<circle cx="19" cy="12" r="7.5" fill="#f4f4f4" stroke="#c8c8c8" stroke-width="1.2"/><path d="M23 12 L15 12 M18 9 L15 12 L18 15" stroke="#c8c8c8" stroke-width="1.8" fill="none"/>
<circle cx="45.5" cy="12" r="7.5" fill="#f4f4f4" stroke="#c8c8c8" stroke-width="1.2"/><path d="M41.5 12 L49.5 12 M46.5 9 L49.5 12 L46.5 15" stroke="#c8c8c8" stroke-width="1.8" fill="none"/>
<path d="M65 10 L72 10 L68.5 14 Z" fill="#555"/>
<path d="M80.5 6 L84 4 L88 5 L91 4.5 L91 17 L88 19 L80.5 18 Z" fill="#e8e8e8" stroke="#333" stroke-width="1"/><path d="M84 5 L84 18.5 M87.5 5 L87.5 19" stroke="#333" stroke-width="0.8"/>
<path d="M91 14 L97 14 M94 11 L94 17" stroke="#2aa02a" stroke-width="2.4"/>
<path d="M110 7 L113 5 L117 6 L121 5.5 L121 18 L117 20 L110 18.5 Z" fill="#e8e8e8" stroke="#333" stroke-width="1"/><path d="M113 6 L113 19 M117 6 L117 20" stroke="#333" stroke-width="0.8"/>
<path d="M108 3 L110 5 M106 5 L109 5 M108 2 L108 7" stroke="#f0a010" stroke-width="1.2"/>
<path d="M135.5 19.5 L135.5 8.5 L140 8.5 L141.5 10 L147.5 10 L147.5 12.5" fill="#d8d8d8" stroke="#333" stroke-width="1"/><path d="M135.5 19.5 L139 12.5 L152 12.5 L148 19.5 Z" fill="#eef0f4" stroke="#333" stroke-width="1"/>
<path d="M135 4 L137 7 M133 6 L138 6 M136 3 L136 8" stroke="#f0a010" stroke-width="1.2"/>
<path d="M164 9 C166 4 174 4 176 8 M176 4 L176 9 L171 9" fill="none" stroke="#2a7fc8" stroke-width="2.4"/>
<path d="M177 15 C175 20 167 20 165 16 M165 20 L165 15 L170 15" fill="none" stroke="#2a7fc8" stroke-width="2.4"/>
<path d="M197 20 L197 8 M192.5 12 L197 6 L201.5 12" fill="none" stroke="#c8c8c8" stroke-width="2"/>
</svg>
<div class="a" style="left:1472px;top:173px;width:207px;height:1px;background:#c4c4c4"></div>
<div class="a" style="left:1496px;top:181px;width:106px;height:22px;background:#d8e6f5"></div>
<svg width="8" height="12" style="left:1482px;top:187px"><path d="M1.5 1 L6 5.5 L1.5 10" fill="none" stroke="#777" stroke-width="1.4"/></svg>
<svg width="18" height="20" style="left:1499px;top:183px"><path d="M1.5 4 L5 1.5 L9 2.5 L13 1.5 L16 3 L16 15 L12 17.5 L8 16 L4 17.5 L1.5 16 Z" fill="#eaeaea" stroke="#333"/><path d="M5 2 L5 17 M9 2.5 L9 16.5 M12.5 2 L12.5 17" stroke="#333" stroke-width="0.9"/></svg>
<div class="t" style="left:1523px;top:186px;transform:scaleX(0.97);transform-origin:0 0">Design Library</div>
<svg width="8" height="12" style="left:1482px;top:209px"><path d="M1.5 1 L6 5.5 L1.5 10" fill="none" stroke="#777" stroke-width="1.4"/></svg>
<svg width="18" height="20" style="left:1500px;top:205px"><path d="M2 2 L13 2 L13 6 L2 6 Z" fill="#ddd" stroke="#333"/><rect x="5" y="6" width="5" height="11" fill="#ccc" stroke="#333"/><path d="M5 9 L10 10 M5 12 L10 13 M5 15 L10 16" stroke="#333" stroke-width="0.8"/></svg>
<div class="t" style="left:1523px;top:208px">Toolbox</div>
<svg width="8" height="12" style="left:1482px;top:231px"><path d="M1.5 1 L6 5.5 L1.5 10" fill="none" stroke="#777" stroke-width="1.4"/></svg>
<svg width="18" height="20" style="left:1499px;top:227px"><circle cx="8.5" cy="9.5" r="7.5" fill="#dfe6ee" stroke="#667" stroke-width="1"/><path d="M4 5 C6 3 9 4 8 7 C7 9 4 9 5 12 M10 6 C13 6 14 9 12 11" fill="none" stroke="#2a7fc8" stroke-width="2.2"/></svg>
<div class="t" style="left:1523px;top:230px">3D ContentCentral</div>
<svg width="8" height="12" style="left:1482px;top:253px"><path d="M1.5 1 L6 5.5 L1.5 10" fill="none" stroke="#777" stroke-width="1.4"/></svg>
<svg width="18" height="20" style="left:1499px;top:249px"><path d="M1 4 L9 1.5 L17 4 L9 6.5 Z" fill="#e85050" stroke="#801010" stroke-width="0.6"/><path d="M1 4 L9 6.5 L9 18.5 L1 15.5 Z" fill="#d42020" stroke="#801010" stroke-width="0.6"/><path d="M9 6.5 L17 4 L17 15.5 L9 18.5 Z" fill="#a81818" stroke="#801010" stroke-width="0.6"/><text x="2.2" y="15" font-family="Liberation Sans" font-weight="bold" font-size="8.5" fill="#fff">S</text><text x="9.3" y="14.5" font-family="Liberation Sans" font-weight="bold" font-size="7.5" fill="#fff">W</text></svg>
<div class="t" style="left:1523px;top:252px;transform:scaleX(0.928);transform-origin:0 0">SOLIDWORKS Content</div>
<div class="t c" style="left:1458px;width:100px;top:740px">motion</div>
<div class="t c" style="left:1534px;width:100px;top:740px">parts</div>
<div class="t c" style="left:1458px;width:100px;top:815px">routing</div>
<div class="t c" style="left:1534px;width:100px;top:815px">smart</div>
<div class="t c" style="left:1534px;width:100px;top:830px">components</div>
<svg width="30" height="28" style="left:1495px;top:781px"><path d="M0.5 25.5 L0.5 2 Q0.5 0.5 2 0.5 L8 0.5 Q9.5 0.5 10 2 L10.5 3 L26 3 Q27.5 3 27.5 4.5 L27.5 25.5 Z" fill="#d4d4d4" stroke="#333" stroke-width="1"/><path d="M1 5.5 L27 5.5 L27 25 L1 25 Z" fill="#e6e7ec"/><path d="M1 25 L20 5.5 L27 5.5 L27 10 L12 25 Z" fill="#eceef4"/><path d="M12 25 L27 10 L27 25 Z" fill="#d2d2d2"/><path d="M0.5 25.5 L27.5 25.5" stroke="#333" stroke-width="1"/></svg>
<svg width="30" height="28" style="left:1570px;top:781px"><path d="M0.5 25.5 L0.5 2 Q0.5 0.5 2 0.5 L8 0.5 Q9.5 0.5 10 2 L10.5 3 L26 3 Q27.5 3 27.5 4.5 L27.5 25.5 Z" fill="#d4d4d4" stroke="#333" stroke-width="1"/><path d="M1 5.5 L27 5.5 L27 25 L1 25 Z" fill="#e6e7ec"/><path d="M1 25 L20 5.5 L27 5.5 L27 10 L12 25 Z" fill="#eceef4"/><path d="M12 25 L27 10 L27 25 Z" fill="#d2d2d2"/><path d="M0.5 25.5 L27.5 25.5" stroke="#333" stroke-width="1"/></svg>
<div class="a" style="left:1664px;top:539px;width:15px;height:2px;background:#5a5e6c"></div>
<div class="a" style="left:1442px;top:168px;width:27px;height:25px;background:#d4d4d4;border:1px solid #a0a0a0;border-right:none"></div>
<div class="a" style="left:1442px;top:191px;width:27px;height:25px;background:#fbfbfb;border:1px solid #a0a0a0;border-right:none"></div>
<div class="a" style="left:1442px;top:215px;width:27px;height:25px;background:#d4d4d4;border:1px solid #a0a0a0;border-right:none"></div>
<div class="a" style="left:1442px;top:239px;width:27px;height:25px;background:#d4d4d4;border:1px solid #a0a0a0;border-right:none"></div>
<div class="a" style="left:1442px;top:263px;width:27px;height:25px;background:#d4d4d4;border:1px solid #a0a0a0;border-right:none"></div>
<svg width="27" height="125" style="left:1442px;top:168px">
<path d="M4 12 L13.5 3.5 L23 12 M6.5 10 L6.5 20 L20.5 20 L20.5 10 M11.5 20 L11.5 14.5 L15.5 14.5 L15.5 20" fill="none" stroke="#1f5a8a" stroke-width="1.9"/>
<path d="M7 29 L10.5 27 L14 28 L18 27 L20 28.5 L20 41 L16.5 43 L12.5 42 L9 43 L7 41.5 Z" fill="#eaeaea" stroke="#333"/><path d="M10.5 27.5 L10.5 42.5 M14 28 L14 42 M17.5 27.5 L17.5 42.5" stroke="#333" stroke-width="0.9"/>
<path d="M4.5 66 L4.5 51.5 L10.5 51.5 L12 53.5 L20.5 53.5 L20.5 57" fill="#d8d8d8" stroke="#333"/><path d="M4.5 66 L8.5 57 L24.5 57 L20 66 Z" fill="#eef0f4" stroke="#333"/>
<rect x="5.5" y="76.5" width="16" height="15" fill="#fafafa" stroke="#333"/><path d="M8 80 L14 80 M11 80 L11 84 L8 84 L8 87 L15 87" stroke="#e0a010" stroke-width="2" fill="none"/><rect x="16" y="79" width="3" height="9" fill="#ccc" stroke="#333" stroke-width="0.6"/>
<circle cx="13.5" cy="107" r="7.5" fill="#e6342a"/><path d="M13.5 107 L6 107 A7.5 7.5 0 0 0 13.5 114.5 Z" fill="#2aa84a"/><path d="M13.5 107 L13.5 114.5 A7.5 7.5 0 0 0 21 107 Z" fill="#f2c51c"/><path d="M13.5 107 L6 107 A7.5 7.5 0 0 1 10 100.5 Z" fill="#2e7fc8"/>
</svg>
<svg width="130" height="20" style="left:1330px;top:124px">
<rect x="5.5" y="2.5" width="12" height="13" fill="none" stroke="#a8a8a8" stroke-width="1.2"/><path d="M9 5 L9 13" stroke="#a8a8a8" stroke-width="1.2"/><path d="M14 6 L11 9 L14 12 Z" fill="#a8a8a8"/>
<rect x="31.5" y="2.5" width="12" height="13" fill="none" stroke="#a8a8a8" stroke-width="1.2"/><path d="M40 5 L40 13" stroke="#a8a8a8" stroke-width="1.2"/><path d="M35 6 L38 9 L35 12 Z" fill="#a8a8a8"/>
<path d="M59 13.5 L69 13.5" stroke="#a8a8a8" stroke-width="2"/>
<rect x="83.5" y="6.5" width="8" height="7" fill="none" stroke="#a8a8a8" stroke-width="1.2"/><path d="M86.5 6.5 L86.5 3.5 L95.5 3.5 L95.5 10.5 L91.5 10.5" fill="none" stroke="#a8a8a8" stroke-width="1.2"/>
<path d="M111 4.5 L120 13.5 M120 4.5 L111 13.5" stroke="#a8a8a8" stroke-width="1.5"/>
</svg>
</div>
<div id="dialog" class="a" style="left:0;top:0;width:0;height:0;z-index:20">
<div class="a" style="left:1254px;top:282px;width:419px;height:460px;border-radius:11px;background:rgba(40,50,80,0.055)"></div>
<div class="a" style="left:1269px;top:294px;width:402px;height:443px;border-radius:3px;background:rgba(0,0,0,0.13)"></div>
<div class="a" style="left:1262px;top:292px;width:6px;height:448px;border-radius:3px 0 0 3px;background:rgba(0,0,0,0.08)"></div>
<div class="a" style="left:1267px;top:289px;width:398px;height:443px;background:#f7f7f7;border:1px solid #a8a8a8"></div>
<svg width="18" height="16" style="left:1275px;top:296px"><path d="M0.5 12.5 L6 9.5 L8 11.5 L1.5 14.5 Z" fill="#d8c070" stroke="#665010" stroke-width="0.7"/><path d="M4 4 Q4 1 8 1 L13 1 Q16 1 16 4 L16 9 Q16 12 13 12 L8 12 Q4 12 4 9 Z" fill="#4a90c8" stroke="#1f4a78"/><circle cx="11" cy="7" r="2.6" fill="#f2c51c" stroke="#665010" stroke-width="0.6"/></svg>
<div class="t" style="left:1298px;top:298px;color:#9a9088;transform:scaleX(0.953);transform-origin:0 0">Measure - Assem1</div>
<div class="t" style="left:1592px;top:298px;color:#999">?</div>
<svg width="14" height="14" style="left:1634px;top:297px"><path d="M1.5 1.5 L12 12 M12 1.5 L1.5 12" stroke="#777" stroke-width="1.1"/></svg>
<svg width="400" height="30" style="left:1268px;top:318px">
<circle cx="8.5" cy="17.5" r="3.2" fill="none" stroke="#333" stroke-width="1.1"/><circle cx="17.5" cy="17.5" r="3.2" fill="none" stroke="#333" stroke-width="1.1"/><path d="M8.5 14.3 L8.5 9 M17.5 14.3 L17.5 9 M8.5 10.5 L17.5 10.5 M6.5 10.5 L10.5 10.5 M15.5 10.5 L19.5 10.5" stroke="#2a6fb0" stroke-width="1"/>
<path d="M31 13 L37 13 L34 16 Z" fill="#444"/>
<text x="49" y="15" font-family="Liberation Sans" font-weight="bold" font-size="10.5" fill="#111">in</text>
<text x="46" y="24" font-family="Liberation Sans" font-weight="bold" font-size="10" fill="#111" textLength="18" lengthAdjust="spacingAndGlyphs">mm</text>
<rect x="69.5" y="2.5" width="26" height="25" fill="#c4c4c4" stroke="#8c8c8c"/>
<text x="72" y="13" font-family="Liberation Sans" font-weight="bold" font-size="9.5" fill="#2a7fb8">x</text><text x="80" y="18" font-family="Liberation Sans" font-weight="bold" font-size="10" fill="#2a7fb8">Y</text><text x="87" y="24" font-family="Liberation Sans" font-weight="bold" font-size="9" fill="#2a7fb8">z</text><ellipse cx="78" cy="21.5" rx="5.5" ry="3.2" fill="#fff" stroke="#222" stroke-width="1.2"/><circle cx="78" cy="21.5" r="1.8" fill="#222"/>
<path d="M104 21 L114 11 L119 16 L109 26 Z" fill="#f0c020" stroke="#222" stroke-width="1.1"/><path d="M107 19 L108.5 20.5 M110 16 L111.5 17.5 M113 13 L114.5 14.5" stroke="#222" stroke-width="0.8"/><path d="M102 14 L111 6" stroke="#23507a" stroke-width="1.2"/><rect x="100" y="12.5" width="3.5" height="3.5" fill="#5aa0d8" stroke="#23507a" stroke-width="0.8"/><rect x="109.5" y="4" width="3.5" height="3.5" fill="#5aa0d8" stroke="#23507a" stroke-width="0.8"/>
<path d="M128.5 10 L144.5 6 L144.5 21 L128.5 24 Z" fill="#e6eaf2" stroke="#333" stroke-width="1.1"/>
<path d="M136 14 L142 20 M136 14 L136 18 M136 14 L140 14" stroke="#2a7fc8" stroke-width="1.8" fill="none"/>
<path d="M154 13 L160 13 L157 16 Z" fill="#444"/>
<path d="M169 22 L175 19 L178 22 L172 25 Z" fill="#d8b440" stroke="#665010" stroke-width="0.7"/>
<circle cx="180" cy="14" r="7" fill="#5aa0d8" stroke="#23507a"/><circle cx="180" cy="14.5" r="3" fill="#f2c51c"/>
<circle cx="183" cy="20" r="4" fill="#fff" stroke="#333" stroke-width="0.9"/><path d="M183 18 L183 20 L185 20" stroke="#333" stroke-width="0.7" fill="none"/>
<path d="M194.5 4 L194.5 25" stroke="#555" stroke-width="1"/>
<rect x="202.5" y="6.5" width="17" height="17" fill="#fafafa" stroke="#333" stroke-width="1.1"/>
<path d="M204 20 L208 11 L212 17 L215 9 L219 13" fill="none" stroke="#2a6fb0" stroke-width="1.5"/>
<path d="M347 15 L355 15" stroke="#555" stroke-width="1.5"/><path d="M355 10 L355 20" stroke="#555" stroke-width="1.8"/><path d="M356 12 L361 12.5 L361 17.5 L356 18 Z" fill="#555"/>
<path d="M376 18 L381.5 12.5 L387 18" fill="none" stroke="#333" stroke-width="1.6"/>
</svg>
<div class="a" style="left:1268px;top:354px;width:396px;height:105px;background:#d7e4f2;border:2px solid #56a8e8"></div>
<div class="a" style="left:1271px;top:372px;width:390px;height:16px;background:#0a78d7"></div>
<div class="t" style="left:1273px;top:357px;letter-spacing:-0.15px;transform:scaleX(0.956);transform-origin:0 0">Edge&lt;1&gt;@Part2-1</div>
<div class="t" style="left:1273px;top:373px;color:#fff;letter-spacing:-0.15px;transform:scaleX(0.956);transform-origin:0 0">Edge&lt;2&gt;@Part2-1</div>
<svg width="50" height="20" style="left:1612px;top:475px">
<text x="1" y="16" font-family="Liberation Sans" font-size="11" fill="#222">A</text><text x="8" y="16" font-family="Liberation Sans" font-size="14" fill="#222">A</text>
<path d="M10 6 L10 1 M8 3 L10 1 L12 3" stroke="#2a6fb0" stroke-width="1.2" fill="none"/>
<text x="29" y="16" font-family="Liberation Sans" font-size="11" fill="#c0c0c0">A</text><text x="36" y="16" font-family="Liberation Sans" font-size="14" fill="#c0c0c0">A</text>
<path d="M38 1 L38 6 M36 4 L38 6 L40 4" stroke="#c0c0c0" stroke-width="1.2" fill="none"/>
</svg>
<div class="t" style="left:1272px;top:503px;font-size:11px;letter-spacing:-0.05px;transform:scaleX(1.036);transform-origin:0 0">Distance between circle centers:&nbsp; 35mm</div>
<div class="t" style="left:1272px;top:516px;font-size:11px;letter-spacing:-0.05px;transform:scaleX(1.02);transform-origin:0 0">Arc / Circle Measurements Distance: 35.00mm</div>
<div class="t" style="left:1272px;top:529px;font-size:11px;letter-spacing:-0.05px">Delta X: 0.00mm</div>
<div class="t" style="left:1272px;top:542px;font-size:11px;letter-spacing:-0.05px">Delta Y: 0.00mm</div>
<div class="t" style="left:1272px;top:555px;font-size:11px;letter-spacing:-0.05px">Delta Z: 35.00mm</div>
<div class="t" style="left:1272px;top:568px;font-size:11px;letter-spacing:-0.05px">Total Length: 94.25mm</div>
<div class="t" style="left:1272px;top:594px;font-size:11px;letter-spacing:-0.05px">File: Part2-1@Assem1 To: Part2-1@Assem1</div>
<div class="t" style="left:1272px;top:607px;font-size:11px;letter-spacing:-0.05px">File: Assem1 Config: Default</div>
</div>
<div id="bottom" class="a" style="left:0;top:0;width:0;height:0;z-index:12">
<svg width="420" height="24" style="left:640px;top:121px">
<path d="M5 17 L14 13 L23 17 L14 21 Z" fill="#a3c8e2" stroke="#4a7898" stroke-width="0.9"/><path d="M14 17 L14 4 M11 7 L14 3 L17 7" stroke="#222" stroke-width="1.5" fill="none"/>
<path d="M33 7 L40 4 L48 7 L48 16 L40 20 L33 16 Z" fill="#a3c8e2" stroke="#4a7898"/><path d="M33 7 L40 10 L48 7 M40 10 L40 20" stroke="#4a7898" fill="none" stroke-width="0.9"/>
<circle cx="67" cy="10" r="6.5" fill="#e8f0f8" stroke="#444" stroke-width="1.2"/><path d="M62 15 L57 21" stroke="#5a8eb8" stroke-width="2.5"/><path d="M67 5.5 L67 7.5 M67 12.5 L67 14.5 M62.5 10 L64.5 10 M69.5 10 L71.5 10" stroke="#444" stroke-width="1"/>
<circle cx="92" cy="11" r="6.5" fill="#f0f4f8" stroke="#444" stroke-width="1.2"/><path d="M87 16 L82 21" stroke="#5a8eb8" stroke-width="2.5"/><rect x="86.5" y="3.5" width="14" height="12" fill="none" stroke="#555" stroke-dasharray="2 1.5"/>
<path d="M110 16 L122 7 L126 11 L114 21 Z" fill="#e0e0e0" stroke="#777"/><path d="M122 7 L124 4 L127 6 L126 11" fill="#d0d0d0" stroke="#777"/><ellipse cx="112" cy="18.5" rx="2.5" ry="3.2" fill="#bbb" stroke="#777" transform="rotate(-40 112 18.5)"/><path d="M119 17 L127 17 M122 14 L119 17 L122 20" stroke="#4a88b8" stroke-width="2" fill="none"/>
<path d="M135.5 8 C135.5 4 153.5 4 153.5 8 L153.5 19 C153.5 21 150 21.5 148.5 21 L148.5 10 C148.5 8 140.5 8 140.5 10 L140.5 21 C139 21.5 135.5 21 135.5 19 Z" fill="#a3c8e2" stroke="#444"/><path d="M140.5 10 C140.5 8 148.5 8 148.5 10 L148.5 21 L140.5 21 Z" fill="#d8d8d8" stroke="#666"/><path d="M136.5 13 L139.5 10 M136.5 17 L139.5 14 M136.5 20 L139.5 18 M149.5 13 L152.5 10 M149.5 17 L152.5 14 M149.5 20 L152.5 18" stroke="#3a6888" stroke-width="0.8"/>
<path d="M161 18 L173 9 L177 13 L165 22 Z" fill="#ddd" stroke="#555"/><path d="M168 3 L175 3 L170 8 L174 8 L166 13 L169 8 L166 8 Z" fill="#f0a010"/><text x="170" y="22" font-family="Liberation Serif" font-size="11" fill="#4a7898">A</text>
<path d="M187 7 L192 3 L205 3 L205 16 L200 21 L187 21 Z" fill="#a3c8e2" stroke="#333"/><path d="M187 7 L200 7 L200 21 M200 7 L205 3" stroke="#333" fill="none"/>
<path d="M212 11 L218 11 L215 14 Z" fill="#999"/>
<path d="M228 6 L235 3 L245 5 L245 19 L238 22 L228 19 Z" fill="#e8f0f8" stroke="#555"/><path d="M228 6 L238 9 L245 5 M238 9 L238 22" stroke="#555" fill="none"/><path d="M229 7 L237 10 L237 21 L229 18 Z" fill="#a3c8e2"/>
<path d="M252 11 L258 11 L255 14 Z" fill="#999"/>
<path d="M266 12 C270 5 281 5 285 12 C281 19 270 19 266 12 Z" fill="#ddd" stroke="#888"/><circle cx="275.5" cy="12" r="3.5" fill="#666"/><path d="M275.5 4 L275.5 20" stroke="#888"/>
<path d="M292 11 L298 11 L295 14 Z" fill="#999"/>
<circle cx="314" cy="11" r="8" fill="#e6342a"/><path d="M314 11 L306 11 A8 8 0 0 0 314 19 Z" fill="#2aa84a"/><path d="M314 11 L314 19 A8 8 0 0 0 322 11 Z" fill="#f2c51c"/><path d="M306 11 A8 8 0 0 1 312 3 L314 11 Z" fill="#2e7fc8"/>
<path d="M316 20 L325 11 L327 13 L318 22 Z" fill="#f0c020" stroke="#333" stroke-width="0.8"/>
<circle cx="340" cy="10" r="7.5" fill="#e6342a"/><path d="M340 10 L332.5 10 A7.5 7.5 0 0 0 340 17.5 Z" fill="#2aa84a"/><path d="M340 10 L340 17.5 A7.5 7.5 0 0 0 347.5 10 Z" fill="#f2c51c"/><path d="M332.5 10 A7.5 7.5 0 0 1 338 2.5 L340 10 Z" fill="#2e7fc8"/>
<rect x="331" y="15" width="19" height="7" fill="#222"/><path d="M333 16 L333 21 M337 16 L337 21 M341 16 L341 21 M345 16 L345 21" stroke="#eee" stroke-width="1.5" stroke-dasharray="2 1"/>
<path d="M357 11 L363 11 L360 14 Z" fill="#999"/>
<rect x="373.5" y="3.5" width="17" height="13" fill="#c8c9cc" stroke="#555" stroke-width="1.2"/><ellipse cx="382" cy="12" rx="4" ry="2.5" fill="#dde6f0"/><path d="M382 16.5 L382 20 M377 20.5 L387 20.5" stroke="#555" stroke-width="1.5"/>
<path d="M398 11 L404 11 L401 14 Z" fill="#999"/>
</svg>
<div class="a" style="left:842px;top:452px;width:141px;height:28px;background:#f7f7f7;border:1px solid #111"></div>
<div class="a" style="left:933px;top:452px;width:1px;height:28px;background:#111"></div>
<div class="t" style="left:850px;top:460px;transform:scaleX(0.933);transform-origin:0 0">Center Dist</div>
<svg width="10" height="8" style="left:917px;top:463px"><path d="M1 1.5 L5 5.5 L9 1.5" fill="none" stroke="#555" stroke-width="1.2"/></svg>
<div class="t" style="left:937px;top:460px;font-size:11px;transform:scaleX(0.94);transform-origin:0 0">35mm</div>
<div class="a" style="left:1038px;top:348px;width:186px;height:51px;background:#f7f7f7;border:1px solid #111"></div>
<div class="a" style="left:1096px;top:348px;width:1px;height:51px;background:#111"></div>
<div class="t" style="left:1045px;top:355px;font-size:11px">Diameter:</div>
<div class="t" style="left:1045px;top:380px;font-size:11px">Center:</div>
<div class="t" style="left:1100px;top:355px;font-size:11px">15mm</div>
<div class="t" style="left:1100px;top:380px;font-size:11px;letter-spacing:-0.2px">42mm,85mm,-17.5mm</div>
<svg width="1" height="1" style="left:0;top:0"><circle cx="913.5" cy="479" r="3" fill="#eee" stroke="#333" stroke-width="1"/><circle cx="1131" cy="398.5" r="3" fill="#eee" stroke="#333" stroke-width="1"/></svg>
<div class="a" style="left:229px;top:527px;width:9px;height:39px;background:#f7f7f7;border:1px solid #8c8c8c;border-left:none"></div>
<div class="a" style="left:230px;top:544px;width:5px;height:5px;border-radius:50%;background:#c8c8c8;border:1px solid #888"></div>
<div class="a" style="left:0;top:190px;width:1px;height:786px;background:#b4b4b4"></div>
<svg width="1" height="1" style="left:0;top:0"><path d="M266 878 L269.6 882.5 L273.2 878 M269.6 882.5 L269.6 886.6" fill="none" stroke="#22aa22" stroke-width="1"/><path d="M234 913.5 L239 913.5 L234 921.2 L239 921.2" fill="none" stroke="#1a1aee" stroke-width="1.1"/></svg>
<div class="a" style="left:0;top:976px;width:1468px;height:1px;background:#a0a0a0"></div>
<div class="a" style="left:0;top:991px;width:1679px;height:1px;background:#a0a0a0"></div>
<div class="a" style="left:2px;top:977px;width:64px;height:14px;background:#bcbcbc;border-top:1px solid #333"></div>
<svg width="66" height="14" style="left:2px;top:977px">
<path d="M16.5 1 L16.5 14 M32.5 1 L32.5 14 M48.5 1 L48.5 14" stroke="#d8d8d8" stroke-width="1"/>
<path d="M5 3 L5 11 M12 3 L7 7 L12 11 Z" fill="#a8a8a8" stroke="#a8a8a8" stroke-width="1"/>
<path d="M28 3 L22 7 L28 11 Z" fill="#a8a8a8"/>
<path d="M38 3 L44 7 L38 11 Z" fill="#a8a8a8"/>
<path d="M61 3 L61 11 M54 3 L59 7 L54 11 Z" fill="#a8a8a8" stroke="#a8a8a8" stroke-width="1"/>
</svg>
<div class="a" style="left:66px;top:976px;width:58px;height:15px;background:#fdfdfd;border-right:1px solid #a0a0a0"></div>
<div class="t" style="left:79px;top:977px;font-weight:bold">Model</div>
<div class="a" style="left:124px;top:977px;width:175px;height:14px;background:#d6d6d6;border-right:1px solid #a0a0a0"></div>
<div class="a" style="left:191px;top:977px;width:1px;height:14px;background:#a0a0a0"></div>
<div class="t" style="left:134px;top:977px;transform:scaleX(0.93);transform-origin:0 0">3D Views</div>
<div class="t" style="left:201px;top:977px">Motion Study 1</div>
<div class="a" style="left:1464px;top:976px;width:1px;height:15px;background:#a0a0a0"></div>
<div class="a" style="left:656px;top:980px;width:152px;height:20px;background:#f9f9f9;border:1px solid #777;box-shadow:1px 1px 2px rgba(0,0,0,0.25)"></div>
<div class="t" style="left:661px;top:984px;color:#333;transform:scaleX(0.953);transform-origin:0 0">Boss-Extrude1 of Part2&lt;1&gt;</div>
<div class="t" style="left:2px;top:996px;transform:scaleX(0.95);transform-origin:0 0">Part2&lt;1&gt;</div>
<div class="t" style="left:1302px;top:996px;transform:scaleX(0.966);transform-origin:0 0">Fully Defined</div>
<div class="a" style="left:1377px;top:994px;width:1px;height:15px;background:#d0d0d0"></div>
<div class="t" style="left:1389px;top:996px">Editing Assembly</div>
<div class="a" style="left:1486px;top:994px;width:1px;height:15px;background:#d0d0d0"></div>
<div class="a" style="left:1502px;top:994px;width:1px;height:15px;background:#d0d0d0"></div>
<div class="t" style="left:1534px;top:996px">MMGS</div>
<svg width="8" height="6" style="left:1587px;top:999px"><path d="M0.5 5 L4 1 L7.5 5 Z" fill="#333"/></svg>
<svg width="18" height="16" style="left:1660px;top:993px"><path d="M2 8 L9 3 L16 7 L16 11 L9 15 L2 12 Z" fill="#e8e8e8" stroke="#555"/><path d="M5 8 L9 6 L13 8 L9 10 Z" fill="none" stroke="#555"/></svg>
</div>
</body></html>
